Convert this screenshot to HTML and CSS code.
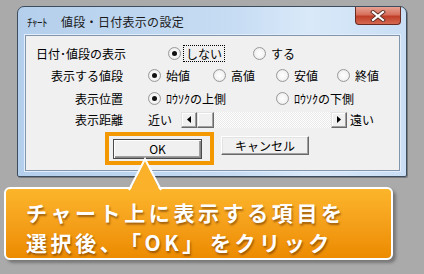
FILE: index.html
```html
<!DOCTYPE html><html lang='ja'>
	<head>
		<meta charset='utf-8'>
		<title>ﾁｬｰﾄ 値段・日付表示の設定</title>
		<link rel="stylesheet" href="styles.css">
	</head>
	<body>
		<div class='stage'>
			<!-- dialog window -->
			<div class='window'>
				<div class='titlebar'>
					<span class='title'><span class='titleApp'>ﾁｬｰﾄ</span>値段・日付表示の設定</span>
					<span class='closeB'>
						<svg width='16' height='12' viewBox='0 0 16 12'>
							<path d='M3 2 L13 10 M13 2 L3 10' stroke='#5a3028' stroke-width='4' stroke-linecap='square'/>
							<path d='M3 2 L13 10 M13 2 L3 10' stroke='#fff' stroke-width='2.2' stroke-linecap='square'/>
						</svg>
					</span>
				</div>
				<div class='client'>
					<!-- date / price display -->
					<div class='row row1'>
						<span class='label'>日付･値段の表示</span>
						<span class='opts'>
							<span class='opt w85'><span class='radio on'></span><span class='focus'>しない</span></span>
							<span class='opt'><span class='radio'></span>する</span>
						</span>
					</div>
					<!-- price type -->
					<div class='row row2'>
						<span class='label'>表示する値段</span>
						<span class='opts'>
							<span class='opt w65'><span class='radio on'></span>始値</span>
							<span class='opt w63'><span class='radio'></span>高値</span>
							<span class='opt w61'><span class='radio'></span>安値</span>
							<span class='opt'><span class='radio'></span>終値</span>
						</span>
					</div>
					<!-- position -->
					<div class='row row3'>
						<span class='label'>表示位置</span>
						<span class='opts'>
							<span class='opt w128'><span class='radio on'></span>ﾛｳｿｸの上側</span>
							<span class='opt'><span class='radio'></span>ﾛｳｿｸの下側</span>
						</span>
					</div>
					<!-- distance -->
					<div class='row row4'>
						<span class='label'>表示距離</span>
						<span class='opts'>
							<span class='near'>近い</span>
							<span class='scroll'>
								<span class='sbtn'><svg width='4' height='7' viewBox='0 0 4 7'><path d='M4 0 L0 3.5 L4 7Z' fill='#000'/></svg></span>
								<span class='thumb'></span>
								<span class='track'></span>
								<span class='sbtn'><svg width='4' height='7' viewBox='0 0 4 7'><path d='M0 0 L4 3.5 L0 7Z' fill='#000'/></svg></span>
							</span>
							<span class='far'>遠い</span>
						</span>
					</div>
					<!-- buttons -->
					<div class='actions'>
						<div class='hl'><button class='btn default' type='button'>OK</button></div>
						<button class='btn cancel' type='button'>キャンセル</button>
					</div>
				</div>
			</div>
			<!-- callout -->
			<div class='callout'>
				<p>チャート上に表示する項目を</p>
				<p>選択後、<span class='quote'>「OK」</span>をクリック</p>
			</div>
			<svg class='pointer' width='34' height='36' viewBox='0 0 34 36'>
				<path d='M2 34 L17 3 L32 34Z' fill='#fbb12a'/>
				<path d='M1 33 L17 2 L33 33' fill='none' stroke='#fff' stroke-width='2'/>
			</svg>
		</div>
	</body>
</html>
```

FILE: styles.css
```css
body{
	margin:0;
	background:#aaa;
	font-family:"Noto Sans CJK JP","DejaVu Sans",sans-serif;
	font-size:12px;
	color:#000;
}
.stage{
	position:relative;
	width:424px;
	height:274px;
	overflow:hidden;
}
/* === window === */
.window{
	margin:6px 0 0 17px;
	width:388px;
	height:169px;
	border:1px solid #3d4d5e;
	border-radius:7px 7px 2px 2px;
	background:linear-gradient(90deg,#b4cfec 0%,#c6dcf3 55%,#d9e9f9 75%,#c9def4 100%);
	box-shadow:1px 1px 0 #7a7a7a;
	display:flex;
	flex-direction:column;
}
.titlebar{
	position:relative;
	height:28px;
	display:flex;
	align-items:center;
	padding-left:9px;
}
.title{
	font-size:12px;
	letter-spacing:0.3px;
	color:#1a1a1a;
}
.titleApp{
	font-size:11px;
	letter-spacing:-0.5px;
	margin-right:14px;
}
.closeB{
	position:absolute;
	right:5px;
	top:0;
	width:44px;
	height:17px;
	border:1px solid #6b2a20;
	border-top:none;
	border-radius:0 0 4px 4px;
	background:linear-gradient(#e8a293 0%,#d66f5b 45%,#c03e28 55%,#d56a50 100%);
	display:flex;
	align-items:center;
	justify-content:center;
}
.client{
	margin:0 6px 5px 7px;
	flex:1;
	background:#f0f0f0;
	border:1px solid #8196ad;
	box-shadow:0 0 0 1px #e4eefa;
	padding-top:6px;
}
/* === rows === */
.row{
	display:flex;
	align-items:center;
}
.row1{height:22px;}
.row2{height:22px;}
.row3{height:24px;}
.row4{height:18px;}
.label{
	width:97px;
	text-align:right;
	white-space:nowrap;
}
.row1 .label{
	text-align:left;
	padding-left:10px;
	width:87px;
}
.opts{
	display:flex;
	align-items:center;
	margin-left:25px;
}
.row1 .opts{
	margin-left:45px;
}
.opt{
	display:flex;
	align-items:center;
	white-space:nowrap;
}
.w85{width:85px;}
.w65{width:65px;}
.w63{width:63px;}
.w61{width:61px;}
.w128{width:128px;}
.radio{
	width:11px;
	height:11px;
	border:1px solid #9a9a9a;
	border-radius:50%;
	background:radial-gradient(circle,#fff 0%,#f4f4f4 55%,#d6d6d6 100%);
	margin-right:5px;
	display:flex;
	align-items:center;
	justify-content:center;
	flex:none;
}
.radio.on::after{
	content:'';
	width:5px;
	height:5px;
	border-radius:50%;
	background:#111;
}
.focus{
	outline:1px dotted #000;
	outline-offset:0;
	padding:0 2px;
	margin-left:-2px;
	line-height:15px;
}
/* === scroll bar === */
.near{
	width:33px;
}
.scroll{
	display:flex;
	width:166px;
	height:16px;
	border-top:1px solid #f0f0f0;
}
.sbtn{
	width:14px;
	height:14px;
	border:1px solid;
	border-color:#e3e3e3 #696969 #696969 #e3e3e3;
	background:#f0f0f0;
	box-shadow:inset -1px -1px 0 #a0a0a0,inset 1px 1px 0 #fff;
	display:flex;
	align-items:center;
	justify-content:center;
	flex:none;
}
.thumb{
	width:15px;
	height:14px;
	border:1px solid;
	border-color:#e3e3e3 #696969 #696969 #e3e3e3;
	background:#f0f0f0;
	box-shadow:inset -1px -1px 0 #a0a0a0,inset 1px 1px 0 #fff;
	flex:none;
}
.track{
	flex:1;
	background-color:#f7f7f7;
	background-image:repeating-conic-gradient(#fff 0 25%,#e9e9e9 0 50%);
	background-size:2px 2px;
}
.far{
	margin-left:3px;
}
/* === buttons === */
.actions{
	display:flex;
	align-items:flex-start;
	margin:4px 0 0 79px;
}
.hl{
	border:4px solid #f39800;
	padding:3px 8px 2px 4px;
}
.btn{
	font-family:"Noto Sans CJK JP","DejaVu Sans",sans-serif;
	font-size:12px;
	font-weight:normal;
	height:20px;
	padding:0;
	background:#f0f0f0;
	border:1px solid;
	border-color:#fff #696969 #696969 #fff;
	box-shadow:inset -1px -1px 0 #a0a0a0,inset 1px 1px 0 #e3e3e3;
	color:#000;
	line-height:16px;
}
.default{
	width:89px;
	border:1px solid #4a4a4a;
	box-shadow:inset 1px 1px 0 #fff,inset -1px -1px 0 #888,inset -2px -2px 0 #a0a0a0;
}
.cancel{
	width:88px;
	margin:4px 0 0 7px;
	height:19px;
}
/* === callout === */
.callout{
	margin:10px 0 0 4px;
	width:365px;
	height:69px;
	border:2px solid #fff;
	border-radius:6px;
	background:linear-gradient(#fbb52b 0%,#f5a01a 50%,#ec8b00 100%);
	box-shadow:3px 3px 3px rgba(60,60,60,0.45);
	padding-left:20px;
	box-sizing:content-box;
}
.callout p{
	margin:0;
	font-size:21px;
	font-weight:bold;
	letter-spacing:3.6px;
	line-height:30px;
	color:#fff;
	text-shadow:1px 2px 2px rgba(90,40,0,0.55);
	white-space:nowrap;
}
.callout p:first-child{
	margin-top:8px;
}
.quote{
	margin:0 3px 0 6px;
}
.pointer{
	position:absolute;
	left:128px;
	top:157px;
}
```
